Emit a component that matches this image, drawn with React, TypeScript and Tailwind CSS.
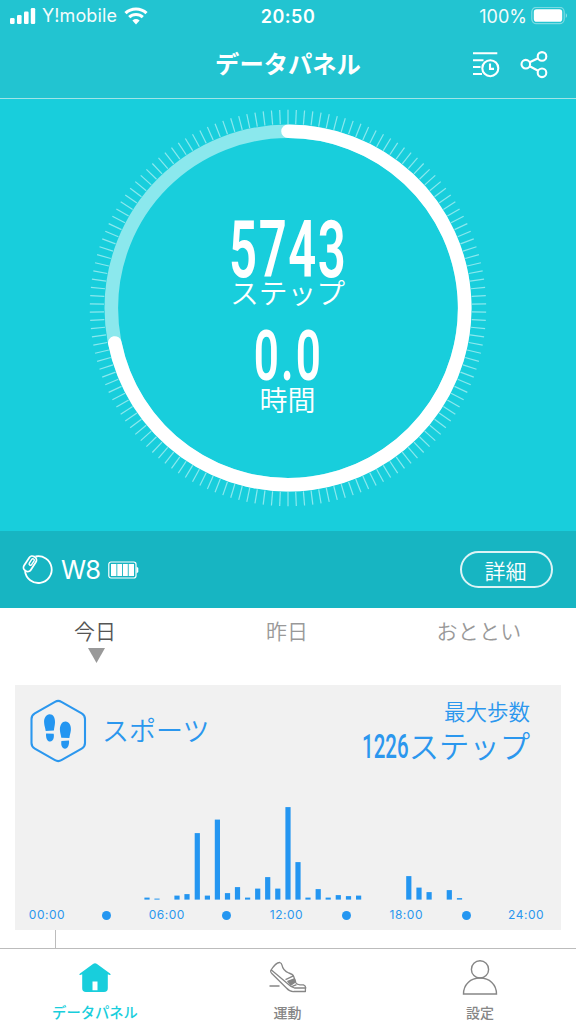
import React from "react";

const JP = "font-['Noto_Sans_CJK_JP',sans-serif]";
const LATIN = "font-['Inter',sans-serif]";

const CENTER = 200;
const TICKS = Array.from({ length: 150 }, (_, i) => i * 2.4);

// [slot centre, height] for each recorded interval
const BARS: [number, number][] = [
  [147, 2], [157, 1], [177, 4], [187, 5.5], [197.3, 66.5], [207.4, 4], [217.4, 80], [227.5, 6.5],
  [237.5, 12.5], [247.6, 2], [257.7, 11], [267.7, 22.5], [277.8, 11], [288, 92.5], [298, 37.5],
  [308, 2], [318.2, 10.5], [328.2, 2], [338.3, 4.5], [348.5, 3.5], [358.6, 4],
  [408.8, 23.5], [419, 12], [429.1, 7.5], [449.3, 9.5], [459.5, 1.5],
];

const AXIS = ["00:00", "", "06:00", "", "12:00", "", "18:00", "", "24:00"];

function StatusBar() {
  return (
    <div className={`grid h-8 grid-cols-3 items-center text-white ${LATIN}`}>
      <div className="flex items-center pl-[10px]">
        <svg width="26" height="16" viewBox="0 0 26 16" fill="currentColor">
          <rect x="0" y="10" width="4.6" height="6" rx="1.2" />
          <rect x="7" y="7" width="4.6" height="9" rx="1.2" />
          <rect x="14" y="3.5" width="4.6" height="12.5" rx="1.2" />
          <rect x="20.8" y="0" width="4.4" height="16" rx="1.2" />
        </svg>
        <span className="ml-[6px] text-[18px] leading-8 tracking-[0.1px] whitespace-nowrap opacity-95">Y!mobile</span>
        <svg className="ml-[7px]" width="24" height="18" viewBox="0 0 24 18" fill="none" stroke="currentColor">
          <path d="M1.5 6.2A15.2 15.2 0 0 1 22.5 6.2" strokeWidth="3.2" />
          <path d="M5.2 10.2A9.8 9.8 0 0 1 18.8 10.2" strokeWidth="3" />
          <path d="M12 17.4L8.4 13.4Q12 10.6 15.6 13.4Z" fill="currentColor" stroke="none" />
        </svg>
      </div>
      <div className="text-center text-[18px] font-semibold tracking-[0.5px]">20:50</div>
      <div className="flex items-center justify-end pr-[8px]">
        <span className="mr-[4px] text-[18px] opacity-95">100%</span>
        <svg width="37" height="18" viewBox="0 0 37 18" fill="currentColor">
          <rect x="0.8" y="0.3" width="32.4" height="16.4" rx="4.6" fill="none" stroke="currentColor" strokeWidth="1.2" opacity=".4" />
          <rect x="2.8" y="2.3" width="28.4" height="12.4" rx="2.8" />
          <path d="M34.8 5.9Q37 8.5 34.8 11.1Z" opacity=".55" />
        </svg>
      </div>
    </div>
  );
}

function TitleBar() {
  return (
    <div className="grid h-[66px] grid-cols-[1fr_auto_1fr] items-center text-white">
      <span />
      <h1 className={`pb-[5px] text-[24.3px] leading-[61px] font-bold ${JP}`}>データパネル</h1>
      <div className="flex items-center justify-end gap-[20px] pr-[28px]">
        <svg width="28" height="28" viewBox="0 0 28 28" fill="none" stroke="currentColor" strokeWidth="2.1">
          <path d="M1 2.2H25.3M1 9.3H11.5M1 16H8.5M1 23H10" />
          <circle cx="18.3" cy="17.2" r="8" />
          <path d="M18 12.5V17.9H22" />
        </svg>
        <svg width="28" height="28" viewBox="0 0 28 28" fill="none" stroke="currentColor" strokeWidth="2.1">
          <circle cx="5.8" cy="13.2" r="4.3" />
          <circle cx="22" cy="5.4" r="4.3" />
          <circle cx="22" cy="21.8" r="4.3" />
          <path d="M9.7 11.3L18.1 7.3M9.7 15.2L18.1 19.7" />
        </svg>
      </div>
    </div>
  );
}

function StepGauge() {
  return (
    <section className="grid h-[432px] justify-center bg-[#18cedc] pt-[9px] text-white">
      <svg className="col-start-1 row-start-1" width="400" height="400" viewBox="0 0 400 400" fill="none">
        {TICKS.map((a) => (
          <path key={a} d="M200 1.8V16" transform={`rotate(${a} ${CENTER} ${CENTER})`} stroke="#8be8ee" strokeWidth="1.2" />
        ))}
        <circle cx="200" cy="200" r="176.7" stroke="#8be8ed" strokeWidth="13.6" />
        <path d="M200 23.3A176.7 176.7 0 1 1 26.8 235" stroke="#fff" strokeWidth="13.6" strokeLinecap="round" />
      </svg>
      <div className="col-start-1 row-start-1 flex flex-col items-center pt-[114px]">
        <div className="h-[56px] origin-center scale-x-[.62] pl-px font-['Roboto',sans-serif] text-[79px] leading-[56px] font-semibold tracking-[2.6px]">5743</div>
        <div className={`h-[52px] pr-px text-[28.8px] leading-[27px] font-[350] ${JP}`}>ステップ</div>
        <div className="h-[51px] origin-center scale-x-[.62] pl-[2px] font-['Roboto',sans-serif] text-[71px] leading-[52px] font-semibold tracking-[3.4px]">0.0</div>
        <div className={`pr-px text-[28px] leading-[36px] font-[350] ${JP}`}>時間</div>
      </div>
    </section>
  );
}

function DeviceRow() {
  return (
    <section className="flex h-[77px] items-center bg-[#17b5c2] pr-[23px] pl-[22px] text-white">
      <svg width="32" height="32" viewBox="0 0 32 32" fill="none" stroke="currentColor" strokeWidth="1.8">
        <path d="M13.5 2.5A13.4 13.4 0 1 1 3 17.2" />
        <rect x="-4" y="-8.3" width="8" height="16.6" rx="3.6" transform="translate(8 9.8) rotate(33)" />
        <rect x="-1.4" y="-3.8" width="2.8" height="7.2" rx="1.4" transform="translate(9.6 8.2) rotate(33)" strokeWidth="1.4" />
      </svg>
      <span className={`ml-[7px] pt-[2px] text-[25.5px] tracking-[-0.8px] ${LATIN}`}>W8</span>
      <svg className="ml-[8px]" width="31" height="18" viewBox="0 0 31 18" fill="currentColor">
        <rect x="0.8" y="1" width="27.2" height="16" rx="2.2" fill="none" stroke="currentColor" strokeWidth="1.2" />
        <path d="M3 3H8.4V15H3ZM9.3 3H14.1V15H9.3ZM15 3H19.8V15H15ZM20.7 3H26V15H20.7Z" />
        <path d="M28.5 5.5L30.3 7V11L28.5 12.5Z" />
      </svg>
      <button className={`ml-auto h-[37px] w-[93px] rounded-full border-2 border-white/85 pr-[2px] text-[21px] leading-[30px] font-[350] ${JP}`}>
        詳細
      </button>
    </section>
  );
}

function DayTabs() {
  return (
    <div className={`grid h-[77px] grid-cols-3 bg-white text-center text-[21px] leading-[44px] font-[350] text-[#999] ${JP}`}>
      <div className="flex flex-col items-center text-[#555]">
        <span className="h-[40px] pr-[2px] leading-[44px]">今日</span>
        <svg width="17" height="15" viewBox="0 0 17 15"><path d="M0 0H17L8.5 15Z" fill="#999" /></svg>
      </div>
      <div className="pr-[2px]">昨日</div>
      <div className="pr-[2px] tracking-[0.3px]">おととい</div>
    </div>
  );
}

function SportsCard() {
  return (
    <section className="mx-[15px] flex h-[245px] w-[546px] flex-col bg-[#f1f1f1] text-[#2b97ee]">
      <div className="flex h-[90px] items-start pr-[31px] pl-[15px]">
        <svg className="mt-[14px]" width="57" height="64" viewBox="0 0 57 64" fill="none">
          <path d="M25 2.8Q28.2 1 31.4 2.8L51.7 14.3Q55 16.2 55 20V44Q55 47.8 51.7 49.7L31.4 61.2Q28.2 63 25 61.2L4.8 49.7Q1.5 47.8 1.5 44V20Q1.5 16.2 4.8 14.3Z" stroke="#2b97ee" strokeWidth="2.1" />
          <g fill="#2496f1">
            <path d="M19.5 15.2C23 15 25.3 18.5 25 23.5C24.9 26.5 24.1 28.7 23.9 31.5L15.7 31.9C15.4 29 14.3 27 14.1 23.4C13.8 18.8 16.3 15.4 19.5 15.2Z" />
            <path d="M16.1 34.4L23.7 34.8C24.4 39 23 42.4 20.2 42.6C17.3 42.7 15.6 38.8 16.1 34.4Z" />
            <path d="M35.5 22.4C39 22.5 41.3 26.2 40.9 30.9C40.6 34.2 39.6 36.2 39.4 39.1L31.3 38.7C31 35.9 29.9 34 29.9 30.6C29.8 25.8 32.3 22.3 35.5 22.4Z" />
            <path d="M31.4 42L39 41.6C39.4 46.2 37.8 49.7 35 49.7C32 49.6 30.7 46.1 31.4 42Z" />
          </g>
        </svg>
        <h2 className={`ml-[15px] pt-[22px] text-[27px] leading-[45px] font-[350] ${JP}`}>スポーツ</h2>
        <div className={`ml-auto flex flex-col items-end pt-[9px] font-[350] ${JP}`}>
          <span className="text-[21.5px] leading-[34px]">最大歩数</span>
          <div className="flex h-[36px] items-center">
            <span className="w-[47px] origin-left scale-x-[.62] pt-px font-['Roboto',sans-serif] text-[33px] leading-[36px] font-medium">1226</span>
            <span className="pb-[2px] text-[30.3px] leading-[32px]">ステップ</span>
          </div>
        </div>
      </div>
      <svg width="546" height="125" viewBox="15 775 546 125" fill="#2496f1">
        {BARS.map(([x, h]) => (
          <rect key={x} x={x - 2.6} y={899.6 - h} width="5.2" height={h} />
        ))}
      </svg>
      <div className={`grid h-[30px] grid-cols-9 items-center justify-items-center pr-[5px] pl-[2px] text-[12px] tracking-[0.5px] ${LATIN}`}>
        {AXIS.map((label, i) =>
          label ? <span key={i}>{label}</span> : <span key={i} className="h-[9px] w-[9px] rounded-full bg-[#2496f1]" />,
        )}
      </div>
    </section>
  );
}

function TabBar() {
  return (
    <nav className={`grid h-[76px] grid-cols-3 border-t border-[#bcbcbc] bg-white text-[14px] leading-[20px] font-medium text-[#868686] ${JP}`}>
      <div className="flex flex-col items-center pt-[12px] pr-[2px] text-[#18cedc]">
        <svg width="34" height="34" viewBox="0 0 34 34" fill="currentColor">
          <path fillRule="evenodd" d="M17 2.2Q18 2.2 19 3L32 12.4Q33.4 14 31.7 14L29.8 13.2V27.2Q29.8 31 26 31H8Q4.2 31 4.2 27.2V13.2L2.3 14Q.6 14 2 12.4L15 3Q16 2.2 17 2.2ZM14.5 20.5V29.3H19.5V20.5Z" />
        </svg>
        <span className="mt-[7px] text-[14.3px]">データパネル</span>
      </div>
      <div className="flex flex-col items-center pt-[12px]">
        <svg width="38" height="34" viewBox="0 0 38 34" fill="none" stroke="currentColor" strokeWidth="1.3" strokeLinejoin="round">
          <path d="M1.7 9.5Q7 1.2 10.8 1.5Q12.5 2 13 4.2Q14 9.8 19.8 12Q23.8 13 24.6 15.2L27 22Q28 23.8 31 23.8H34.5Q36.8 24.6 36.8 27H25.5Q22 26 19 23L2.4 9.1M1.7 9.5Q1.2 11 2.8 12.5L17.4 27Q21 31 25 30.5H36.4V27" />
          <path d="M16.5 18.7L24.5 14.8M22.8 25.7L27.5 23.6" />
          <path d="M18.8 20.3L25.4 17.8L26.4 21L22 24Z" fill="currentColor" />
          <path d="M.5 25H10.5" strokeWidth="1.5" />
        </svg>
        <span className="mt-[7px] pr-[1px]">運動</span>
      </div>
      <div className="flex flex-col items-center pt-[11px]">
        <svg width="36" height="36" viewBox="0 0 36 36" fill="none" stroke="currentColor" strokeWidth="1.4">
          <circle cx="18" cy="9.4" r="8.6" />
          <path d="M1.5 34C1.5 24.4 8.5 18 18 18S34.5 24.4 34.5 34Z" />
        </svg>
        <span className="mt-[6px]">設定</span>
      </div>
    </nav>
  );
}

export default function App() {
  return (
    <main className="flex h-[1024px] w-[576px] flex-col overflow-hidden bg-white">
      <header className="h-[99px] shrink-0 border-b border-[#a1e4e6] bg-[#22c4d1]">
        <StatusBar />
        <TitleBar />
      </header>
      <StepGauge />
      <DeviceRow />
      <DayTabs />
      <SportsCard />
      <div className="ml-[55px] h-[18px] border-l border-[#bcbcbc]" />
      <TabBar />
    </main>
  );
}
